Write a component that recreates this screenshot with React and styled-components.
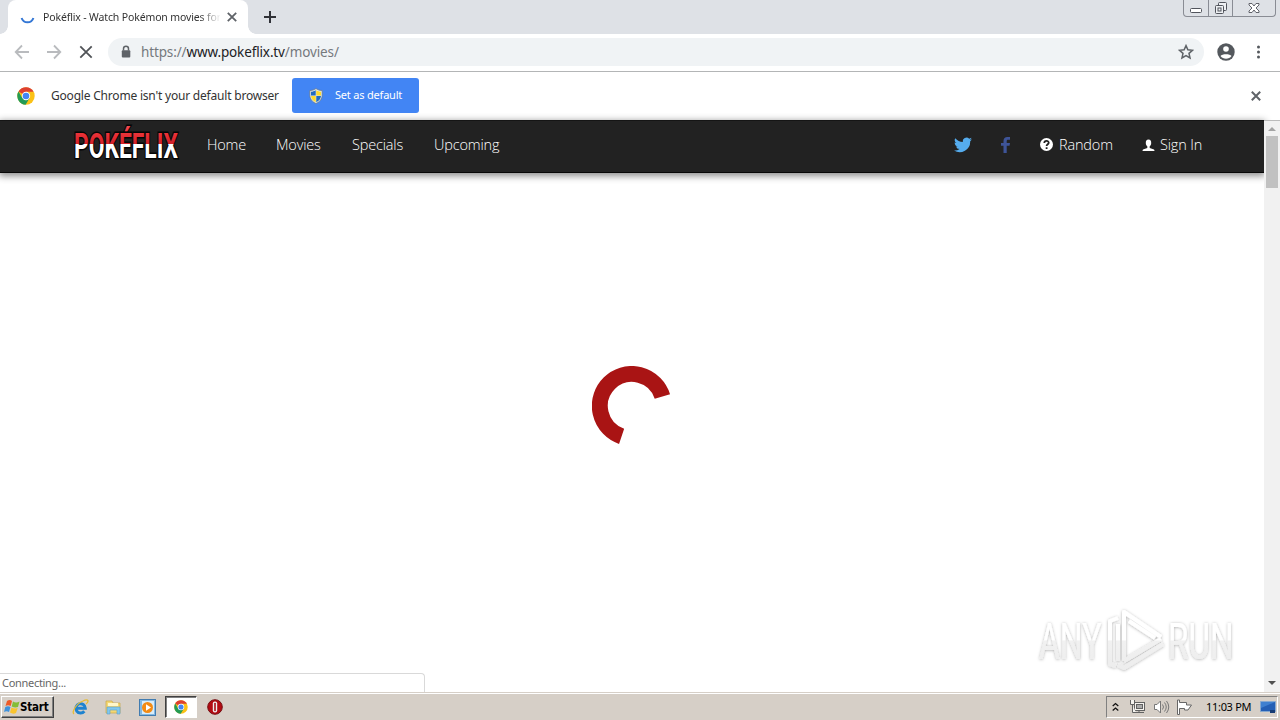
import React from "react";
import styled, { createGlobalStyle } from "styled-components";

const Global = createGlobalStyle`
  * { box-sizing: border-box; }
  body { margin: 0; overflow: hidden; background: #fff; }
  svg { display: block; flex: none; }
`;

const ui = `"DejaVu Sans Condensed", "DejaVu Sans", sans-serif`;

const Screen = styled.div`
  width: 1280px;
  height: 720px;
  display: flex;
  flex-direction: column;
  overflow: hidden;
  font-family: "Noto Sans", sans-serif;
`;

const Label = styled.span`
  display: block;
  flex: none;
  width: ${(p) => p.$w}px;
  font-family: ${(p) => p.$font || `"Noto Sans", sans-serif`};
  font-size: ${(p) => p.$size || 12}px;
  font-weight: ${(p) => p.$weight || 400};
  letter-spacing: ${(p) => p.$track || 0}px;
  color: ${(p) => p.$color || "#333"};
  line-height: ${(p) => p.$line || 20}px;
  white-space: nowrap;
`;

const TabStrip = styled.div`
  height: 34px;
  flex: none;
  display: flex;
  background: #dee1e6;
  padding-left: 8px;
`;
const Tab = styled.div`
  position: relative;
  width: 240px;
  height: 34px;
  display: flex;
  align-items: center;
  padding: 0 10px 0 12px;
  background: #fff;
  border-radius: 8px 8px 0 0;
  &::before, &::after {
    content: "";
    position: absolute;
    bottom: 0;
    width: 8px;
    height: 8px;
  }
  &::before { left: -8px; background: radial-gradient(circle at 0 0, transparent 7.5px, #fff 8px); }
  &::after { right: -8px; background: radial-gradient(circle at 100% 0, transparent 7.5px, #fff 8px); }
`;
const TabTitle = styled.div`
  width: 177px;
  margin: 0 7px 0 8px;
  mask-image: linear-gradient(to right, #000 156px, transparent 178px);
`;
const NewTab = styled.div`
  padding: 11px 0 0 16px;
`;
const WindowButtons = styled.div`
  display: flex;
  height: 17px;
  width: 93px;
  margin: 0 4px 0 auto;
  border: 1px solid #898c94;
  border-top: 0;
  border-radius: 0 0 4px 4px;
`;
const WindowButton = styled.div`
  width: ${(p) => p.$w}px;
  display: flex;
  justify-content: center;
  border-right: ${(p) => (p.$last ? "0" : "1px solid #898c94")};
`;

const Toolbar = styled.div`
  height: 38px;
  flex: none;
  display: flex;
  align-items: center;
  padding: 0 14px 1px;
  gap: 16px;
  border-bottom: 1px solid #b3b5b6;
`;
const Address = styled.div`
  display: flex;
  align-items: center;
  width: 1096px;
  height: 28px;
  margin-left: -2px;
  padding: 0 10px 0 12px;
  border-radius: 14px;
  background: #f0f3f5;
`;
const Url = styled(Label)`
  margin-left: 9px;
  b { font-weight: 400; color: #202124; }
`;
const Spacer = styled.div` flex: 1; `;

const InfoBar = styled.div`
  height: 48px;
  flex: none;
  display: flex;
  align-items: center;
  padding: 0 19px 1px 17px;
`;
const DefaultButton = styled.div`
  display: flex;
  align-items: center;
  width: 127px;
  height: 35px;
  margin-left: 13px;
  padding-left: 17px;
  gap: 12px;
  border-radius: 3px;
  background: #4285f4;
`;

const Viewport = styled.div`
  position: relative;
  height: 572px;
  flex: none;
  display: flex;
`;
const Page = styled.div`
  width: 1264px;
  display: flex;
  flex-direction: column;
`;
const NavBar = styled.div`
  height: 53px;
  flex: none;
  display: flex;
  align-items: center;
  padding: 0 62px 3px 71px;
  background: #222;
  border-top: 1px solid #151515;
  border-bottom: 1px solid #080808;
  box-shadow: 0 2px 7px 1px rgba(0, 0, 0, 0.45);
`;
const NavLinks = styled.div`
  display: flex;
  gap: 30px;
  margin-left: 26px;
`;
const NavAction = styled.div`
  display: flex;
  align-items: center;
  gap: 5px;
  margin-left: ${(p) => p.$gap}px;
`;
const Loading = styled.div`
  flex: 1;
  padding: 193px 0 0 592px;
`;
const Scrollbar = styled.div`
  width: 16px;
  display: flex;
  flex-direction: column;
  align-items: center;
  justify-content: space-between;
  background: #f1f1f1;
  border-top: 1px solid #bbb;
`;
const ScrollTop = styled.div`
  display: flex;
  flex-direction: column;
  align-items: center;
  padding-top: 6px;
  gap: 5px;
`;
const Thumb = styled.div`
  width: 12px;
  height: 52px;
  background: #c1c1c1;
`;
const Arrow = styled.div`
  width: 0;
  height: 0;
  border: 4px solid transparent;
  ${(p) => (p.$down ? "border-top-color: #505050; border-bottom: 0; margin-bottom: 7px;" : "border-bottom-color: #a3a3a3; border-top: 0;")}
`;
const StatusBubble = styled.div`
  position: absolute;
  left: 0;
  bottom: 0;
  width: 425px;
  height: 19px;
  padding-left: 2px;
  background: #fff;
  border: 1px solid #d9d9d9;
  border-left: 0;
  border-bottom: 0;
  border-radius: 0 4px 0 0;
`;
const Watermark = styled.svg`
  position: absolute;
  left: 1030px;
  top: 484px;
`;

const Taskbar = styled.div`
  height: 28px;
  flex: none;
  display: flex;
  align-items: center;
  padding: 1px 2px 0 1px;
  background: #d6cfc7;
  border-top: 1px solid #d6cfc7;
  box-shadow: inset 0 1px 0 #fff;
`;
const StartButton = styled.div`
  width: 53px;
  height: 22px;
  display: flex;
  align-items: center;
  padding-left: 2px;
  border: 1px solid;
  border-color: #fff #404040 #404040 #fff;
  box-shadow: inset -1px -1px 0 #808080;
`;
const QuickLaunch = styled.div`
  display: flex;
  align-items: center;
  margin-left: 18px;
`;
const Launch = styled.div`
  width: ${(p) => p.$w}px;
  height: 22px;
  display: flex;
  align-items: center;
  justify-content: center;
  ${(p) => p.$active && "background: #fff; border: 1px solid; border-color: #404040 #fff #fff #404040; box-shadow: inset 1px 1px 0 #808080;"}
`;
const Tray = styled.div`
  width: 172px;
  height: 22px;
  display: flex;
  align-items: center;
  margin-left: auto;
  padding-left: 5px;
  border: 1px solid;
  border-color: #808080 #fff #fff #808080;
`;

const Cross = ({ size, color, w = 1.8 }) => (
  <svg width={size} height={size} viewBox="0 0 10 10" stroke={color} strokeWidth={w}><path d="M.8.8 9.2 9.2M9.2.8.8 9.2" /></svg>
);
const BackArrow = ({ flip }) => (
  <svg width="16" height="16" viewBox="0 0 16 16" fill="none" stroke="#b9bbbe" strokeWidth="1.8" transform={flip ? "scale(-1 1)" : undefined}><path d="M15 8H2M8 1.5 1.7 8 8 14.5" /></svg>
);
const ChromeLogo = ({ size }) => (
  <svg width={size} height={size} viewBox="0 0 18 18">
    <circle cx="9" cy="9" r="8.7" fill="#fbc116" />
    <path d="M9 9 1.5 4.6A8.7 8.7 0 0 1 16.6 4.8H9Z" fill="#dd4031" />
    <path d="M1.5 4.6A8.7 8.7 0 0 0 8.6 17.7L12.6 11.1 9 9 5.3 11Z" fill="#239b55" />
    <circle cx="9" cy="9" r="4.2" fill="#fff" />
    <circle cx="9" cy="9" r="3.3" fill="#4285f4" />
  </svg>
);
const Shield = () => (
  <svg width="14" height="16" viewBox="0 0 14 16">
    <path d="M7 .5C5 2 3 2.5.8 2.5V7C.8 11 3.5 14 7 15.5 10.500 14 13.200 11 13.200 7V2.500C11 2.500 9 2 7 .5Z" fill="#dce5e7" stroke="#687582" strokeWidth=".7" />
    <path d="M6.700 2.200C5 3.300 4 3.600 2 3.700V7.500H6.700Z M7.300 8H12C11.600 11 10 12.900 7.300 14.200Z" fill="#216bc1" />
    <path d="M7.300 2.200C9 3.300 10 3.600 12 3.700V7.500H7.300Z M6.700 8H2C2.400 11 4 12.900 6.700 14.200Z" fill="#ffdb2c" />
  </svg>
);
const PokeflixLogo = () => (
  <svg width="110" height="42" viewBox="0 1 110 42">
    <defs>
      <linearGradient id="flix" gradientUnits="userSpaceOnUse" x1="0" y1="0" x2="0" y2="34">
        <stop offset="0" stopColor="#f05058" /><stop offset=".25" stopColor="#ee3439" /><stop offset=".59" stopColor="#cf2028" /><stop offset=".6" stopColor="#fff" />
      </linearGradient>
    </defs>
    <g transform="translate(3 1) scale(.643 1)">
      <text x="0" y="34" fontFamily="Roboto, sans-serif" fontWeight="700" fontSize="35.500" fill="url(#flix)" stroke="#050505" strokeWidth="3" paintOrder="stroke">POKÉFLIX</text>
    </g>
  </svg>
);
const AnyRun = () => (
  <Watermark width="212" height="74" viewBox="0 0 212 74">
    <defs>
      <filter id="soft" x="-10%" y="-10%" width="120%" height="130%"><feDropShadow dx="0" dy="0.5" stdDeviation="1.700" floodColor="#000" floodOpacity=".32" /></filter>
      <linearGradient id="fade" gradientUnits="userSpaceOnUse" x1="0" y1="5" x2="0" y2="66"><stop offset=".5" stopColor="#fff" /><stop offset=".53" stopColor="#f1f1f1" /><stop offset="1" stopColor="#ededed" /></linearGradient>
    </defs>
    <g filter="url(#soft)" fill="url(#fade)">
      <g transform="translate(9 0) scale(.64 1)"><text x="0" y="55" fontFamily="Roboto, sans-serif" fontWeight="400" fontSize="50">ANY</text></g>
      <g transform="translate(138 0) scale(.665 1)"><text x="0" y="55" fontFamily="Roboto, sans-serif" fontWeight="400" fontSize="50">RUN</text></g>
      <g fill="none" stroke="url(#fade)" strokeWidth="4" strokeLinejoin="round">
        <path d="M94 57V8L131 33M99 17 125 34M94 57 131 35M88 14 80 17V60L86 62M88 20V57M88 61 94 64 133 40" />
      </g>
    </g>
  </Watermark>
);

export default function App() {
  const nav = { $size: 14.5, $color: "#fff", $font: `"Open Sans", sans-serif`, $weight: 300, $track: -0.17 };
  return (
    <Screen>
      <Global />
      <TabStrip>
        <Tab>
          <svg width="15" height="16" viewBox="0 0 15 16" fill="none" stroke="#3477d5" strokeWidth="2"><path d="M1.600 9A6.200 6.200 0 0 0 13.400 9" /></svg>
          <TabTitle><Label $w={177} $size={10.5} $track={-0.14}>Pokéflix - Watch Pokémon movies for</Label></TabTitle>
          <Cross size={10} color="#5f6368" />
        </Tab>
        <NewTab><svg width="12" height="12" stroke="#303238" strokeWidth="2"><path d="M6 0V12M0 6H12" /></svg></NewTab>
        <WindowButtons>
          <WindowButton $w={25}><svg width="14" height="17" fill="#fff" stroke="#51545c"><rect x="1.500" y="8.500" width="11" height="4" rx="1" /></svg></WindowButton>
          <WindowButton $w={25}><svg width="14" height="17" fill="#eef0f3" stroke="#51545c"><rect x="4.500" y="2.500" width="8" height="8" rx="1" /><rect x="1.500" y="5.500" width="8" height="8" rx="1" /><rect x="4" y="8" width="3" height="3" /></svg></WindowButton>
          <WindowButton $w={42} $last>
            <svg width="14" height="17" fill="#fff" stroke="#51545c" strokeWidth=".9"><path d="M2 3.500H5L7 6 9 3.500H12V5L9 8 12 11V12.500H9L7 10 5 12.500H2V11L5 8 2 5Z" /></svg>
          </WindowButton>
        </WindowButtons>
      </TabStrip>
      <Toolbar>
        <BackArrow />
        <BackArrow flip />
        <svg width="16" height="16" stroke="#505357" strokeWidth="1.800"><path d="M2.300 2.300 13.700 13.700M13.700 2.300 2.300 13.700" /></svg>
        <Address>
          <svg width="12" height="14" viewBox="0 0 12 14"><path d="M3.500 5.500V3.800a2.500 2.500 0 0 1 5 0V5.500" fill="none" stroke="#5f6368" strokeWidth="1.500" /><rect x="1.800" y="5.300" width="8.500" height="7.200" rx="1" fill="#5f6368" /></svg>
          <Url $w={220} $size={13.5} $color="#75797d" $track={-0.13}>https://<b>www.pokeflix.tv</b>/movies/</Url>
          <Spacer />
          <svg width="16" height="16" viewBox="0 0 24 24" fill="none" stroke="#5f6368" strokeWidth="2.300"><path d="m12 2.500 2.800 6.300 6.900.7-5.200 4.600 1.500 6.800-6-3.600-6 3.600 1.500-6.800L2.300 9.500l6.900-.7Z" /></svg>
        </Address>
        <svg width="20" height="20" viewBox="0 0 20 20" style={{ marginLeft: -4 }}><circle cx="10" cy="10" r="8.700" fill="#54585d" /><circle cx="10" cy="7" r="2.800" fill="#fff" /><path d="M4.500 14C6 11.500 14 11.500 15.500 14 13 17.500 7 17.500 4.500 14Z" fill="#fff" /></svg>
        <svg width="6" height="16" fill="#54585d" style={{ marginLeft: 3 }}><circle cx="3.500" cy="3" r="1.500" /><circle cx="3.500" cy="8" r="1.500" /><circle cx="3.500" cy="13" r="1.500" /></svg>
      </Toolbar>
      <InfoBar>
        <ChromeLogo size={18} />
        <Label $w={228} $size={12} $track={-0.2} style={{ marginLeft: 16 }}>Google Chrome isn't your default browser</Label>
        <DefaultButton><Shield /><Label $w={70} $size={11} $color="#fff" $track={-0.2} style={{ paddingBottom: 2 }}>Set as default</Label></DefaultButton>
        <Spacer />
        <Cross size={10} color="#5f6368" w={2} />
      </InfoBar>
      <Viewport>
        <Page>
          <NavBar>
            <PokeflixLogo />
            <NavLinks>
              <Label {...nav} $w={39}>Home</Label>
              <Label {...nav} $w={46}>Movies</Label>
              <Label {...nav} $w={52}>Specials</Label>
              <Label {...nav} $w={66}>Upcoming</Label>
            </NavLinks>
            <Spacer />
            <svg width="18" height="16" viewBox="0 0 18 15" fill="#55acee"><path d="M18 1.800a7 7 0 0 1-2.100.6A3.700 3.700 0 0 0 17.500.3a7 7 0 0 1-2.300.9 3.700 3.700 0 0 0-6.300 3.400A10.500 10.500 0 0 1 1.300.7a3.700 3.700 0 0 0 1.100 4.900 3.700 3.700 0 0 1-1.700-.5 3.700 3.700 0 0 0 3 3.700 3.700 3.700 0 0 1-1.700.1 3.700 3.700 0 0 0 3.500 2.600A7.400 7.400 0 0 1 0 13 10.500 10.500 0 0 0 16.200 3.700 7.500 7.500 0 0 0 18 1.800Z" /></svg>
            <NavAction $gap={29}><svg width="9" height="16" viewBox="0 0 9 16" fill="#3e5498"><path d="M2.500 16V8.700H0V6h2.500V4C2.500 1.300 4 0 6.300 0H9v2.800H7.200c-1.300 0-1.500.6-1.500 1.500V6H9l-.5 2.700H5.700V16Z" /></svg></NavAction>
            <NavAction $gap={30}>
              <svg width="14" height="14" viewBox="0 0 14 14"><circle cx="6.500" cy="6.500" r="6.500" fill="#fff" /><path d="M4.300 5C4.300 2.200 8.800 2.300 8.700 4.800 8.700 6.300 6.600 6.300 6.600 8.100M6.600 9.200V11" fill="none" stroke="#222" strokeWidth="1.800" /></svg>
              <Label {...nav} $w={54}>Random</Label>
            </NavAction>
            <NavAction $gap={29}>
              <svg width="13" height="13" viewBox="0 0 13 13" fill="#fff"><path d="M6.500.5C4.500.5 3.700 2 3.800 4c0 1.700.7 2.800 1.500 3.300V9L1 10.500Q.5 11 .5 12h12q0-1-.5-1.500L7.700 9V7.300C8.500 6.800 9.200 5.700 9.200 4 9.300 2 8.500.5 6.500.5Z" /></svg>
              <Label {...nav} $w={42}>Sign In</Label>
            </NavAction>
          </NavBar>
          <Loading>
            <svg width="80" height="80" viewBox="0 0 80 80" fill="none" stroke="#a91414" strokeWidth="16"><path d="M29.600 70.300A32 32 0 1 1 70.400 30.500" /></svg>
          </Loading>
        </Page>
        <Scrollbar>
          <ScrollTop><Arrow /><Thumb /></ScrollTop>
          <Arrow $down />
        </Scrollbar>
        <AnyRun />
        <StatusBubble><Label $w={70} $size={11} $line={18} $color="#666" $track={-0.3}>Connecting...</Label></StatusBubble>
      </Viewport>
      <Taskbar>
        <StartButton>
          <svg width="16" height="16" viewBox="0 0 16 16"><path d="M3 2Q6 0 8 2L6.700 7Q4 5.500 1.500 7Z" fill="#ee5b28" /><path d="M9 2.500Q12 4.500 15.500 2.500L14 8Q11 9 7.700 7.500Z" fill="#84bd36" /><path d="M1.300 8Q4 6.500 6.500 8L5 13Q2.500 11.500 0 13Z" fill="#3f92dc" /><path d="M7.500 8.500Q11 10 13.700 9L12 14Q9 15.500 6 13.500Z" fill="#f9c42e" /></svg>
          <Label $w={32} $size={11.5} $weight={700} $font={ui} $color="#000" $track={-0.2}>Start</Label>
        </StartButton>
        <QuickLaunch>
          <Launch $w={16}><svg width="17" height="17" viewBox="0 0 17 17" fill="none"><path d="M4.500 9.200H13.300A4.700 4.700 0 1 0 12.300 12.300" stroke="#1f83cf" strokeWidth="3" /><path d="M2 15C-1 13 5 4 11 2 17-1 17 3 14 5" stroke="#e7bb32" strokeWidth="1.300" /></svg></Launch>
          <Launch $w={50}><svg width="17" height="17" viewBox="0 0 17 17"><path d="M1 2H7L8 4H15V14H1Z" fill="#f4d873" stroke="#c8a748" strokeWidth=".7" /><path d="M3 4H13V7H3Z" fill="#fff7c9" /><path d="M2 8H15V15H12V11H5V15H2Z" fill="#80c8ed" stroke="#5a9ec9" strokeWidth=".6" /></svg></Launch>
          <Launch $w={18}><svg width="17" height="17" viewBox="0 0 17 17"><rect x=".5" y=".5" width="16" height="16" fill="#83b9e3" stroke="#427cb0" /><rect x="3" y="2" width="12" height="13" fill="#d9edfa" /><circle cx="8.500" cy="8.500" r="5.500" fill="#f38b14" /><path d="M7 5.300 12 8.500 7 11.700Z" fill="#fff" /></svg></Launch>
          <Launch $w={32} $active style={{ marginLeft: 9 }}><ChromeLogo size={14} /></Launch>
          <Launch $w={16} style={{ marginLeft: 10 }}><svg width="16" height="16" viewBox="0 0 16 16"><circle cx="8" cy="8" r="7.300" fill="#b30a12" stroke="#751014" /><rect x="5.800" y="2.500" width="4.400" height="11" rx="2" fill="#eee" /><rect x="7.200" y="3.800" width="1.600" height="8.400" rx=".8" fill="#a90a12" /></svg></Launch>
        </QuickLaunch>
        <Tray>
          <svg width="7" height="10" fill="none" stroke="#111" strokeWidth="1.300"><path d="M.7 4 3.500 1.500 6.300 4M.7 8.500 3.500 6 6.300 8.500" /></svg>
          <svg width="17" height="16" viewBox="0 0 17 16" fill="#f5f3ef" stroke="#626262" style={{ marginLeft: 10 }}><rect x="5.500" y="3.500" width="10" height="8" /><rect x="7.500" y="5.500" width="6" height="4" fill="#aaa" /><path d="M6 13.500H15M10 12V14M1.500 1V5.500H5.500V1M3.500 5.500V13.500H7" /></svg>
          <svg width="17" height="16" viewBox="0 0 17 16" fill="none" stroke="#777" style={{ marginLeft: 7 }}><path d="M1.500 5.500H4L7.500 2V14L4 10.500H1.500Z" fill="#fff" /><path d="M9.500 5.500Q11.500 8 9.500 10.500M11.500 3.500Q15 8 11.500 12.500M13.500 2Q18 8 13.500 14" /></svg>
          <svg width="17" height="16" viewBox="0 0 17 16" stroke="#666" style={{ marginLeft: 6 }}><path d="M1.500 1V15.500H3.500V9.500H8.500V11H12L15.500 6H10.500V3.500H3.500V1Z" fill="#fff" /></svg>
          <Label $w={47} $size={11} $color="#000" $track={-0.3} style={{ marginLeft: 13 }}>11:03 PM</Label>
          <svg width="16" height="16" viewBox="0 0 16 16" style={{ marginLeft: 7 }}><path d="M.5 2.500H15.500V12.500H.5Z" fill="#245fb5" stroke="#86a8cf" /><path d="M1 3H15L1 9Z" fill="#3f80d0" /><path d="M10 11H15V14H10Z" fill="#163b74" /></svg>
        </Tray>
      </Taskbar>
    </Screen>
  );
}
